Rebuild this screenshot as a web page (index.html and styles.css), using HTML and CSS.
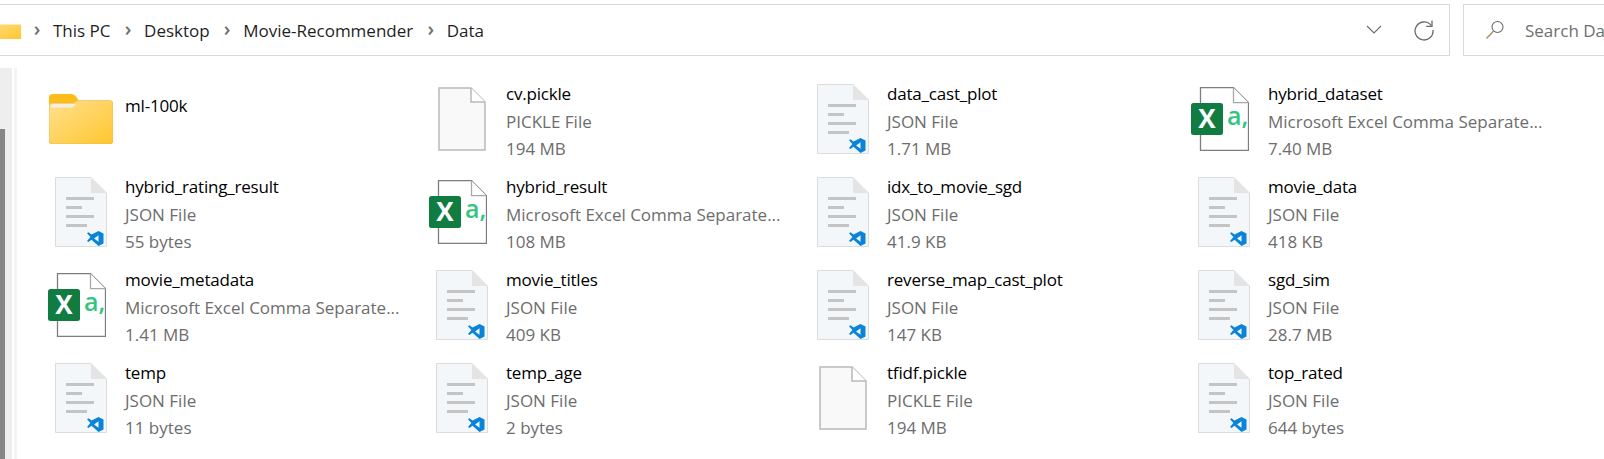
FILE: index.html
```html
<!DOCTYPE html>
<html lang="en">
<head>
    <meta charset="UTF-8">
    <title>Data</title>
    <link rel="stylesheet" href="styles.css">
</head>
<body>
    <svg class="defs" width="0" height="0">
        <defs>
            <linearGradient id="folderFill" x1="0" y1="0" x2="1" y2="1">
                <stop offset="0" stop-color="#ffe08f"/>
                <stop offset="1" stop-color="#ffc62e"/>
            </linearGradient>
            <symbol id="folder" viewBox="0 0 64 50">
                <path d="M0 4a4 4 0 0 1 4-4h18c3 0 5 2 6 4l2 3h30a4 4 0 0 1 4 4v35a4 4 0 0 1-4 4H4a4 4 0 0 1-4-4z" fill="#fcbc19"/>
                <path d="M0 12a3 3 0 0 1 3-3h21l4-2.500h32.500a3.500 3.500 0 0 1 3.500 3.500v36.500a3.500 3.500 0 0 1-3.500 3.500H3.500a3.500 3.500 0 0 1-3.500-3.500z" fill="url(#folderFill)" stroke="#e9b44c" stroke-width=".6"/>
                <path d="M2 12.500a3 3 0 0 1 3-2.500h22l-4 3.500H2z" fill="#f1efe8"/>
            </symbol>
            <symbol id="blank" viewBox="0 0 48 64">
                <path d="M1 1h32l14 14v48H1z" fill="#f9f9f9" stroke="#b9b9b9" stroke-width="1.500"/>
                <path d="M33 1v14h14" fill="#fff" stroke="#b9b9b9" stroke-width="1.500"/>
            </symbol>
            <symbol id="vscode" viewBox="0 0 52 70">
                <path d="M.5.500H36L51.500 16v53.500H.5z" fill="#f4f7fa" stroke="#dcdcdc"/>
                <path d="M36 .5V16h15.500z" fill="#e4e4e4"/>
                <rect x="11" y="20" width="28" height="3" fill="#c4c4c4"/>
                <rect x="11" y="29" width="16" height="3" fill="#c4c4c4"/>
                <rect x="11" y="38" width="28" height="3" fill="#c4c4c4"/>
                <rect x="11" y="47" width="21" height="3" fill="#c4c4c4"/>
                <path d="M43.500 54l5 2.400v10.200l-5 2.400-7-6.300-3 2.300-1.500-1 3.400-3.900-3.400-3.900 1.500-1 3 2.300zm0 4.300l-4.400 3.200 4.400 3.200z" fill="#0a84d8"/>
            </symbol>
            <symbol id="excel" viewBox="0 0 58 64">
                <path d="M9.500.7h33l15 15v47.600h-48z" fill="#fff" stroke="#7d7d7d" stroke-width="1.300"/>
                <path d="M42.500.7v15h15" fill="#fff" stroke="#a8a8a8" stroke-width="1.300"/>
                <rect x="0" y="16" width="32" height="32" rx="2.500" fill="#107c41"/>
                <text x="16" y="41" class="excel-x">X</text>
                <text x="36" y="38" class="excel-a">a,</text>
            </symbol>
        </defs>
    </svg>

    <header class="toolbar">
        <div class="address">
            <svg class="crumb-folder" width="36" height="17" viewBox="0 0 36 17">
                <path d="M0 0h12l3 2.500h21V17H0z" fill="url(#folderFill)"/>
                <path d="M0 0h12l3 2.500H0z" fill="#fcbc19"/>
            </svg>
            <span class="sep">&rsaquo;</span><span class="crumb">This PC</span>
            <span class="sep">&rsaquo;</span><span class="crumb">Desktop</span>
            <span class="sep">&rsaquo;</span><span class="crumb">Movie-Recommender</span>
            <span class="sep">&rsaquo;</span><span class="crumb">Data</span>
            <div class="address-tools">
                <svg width="16" height="10" viewBox="0 0 16 10"><path d="M1 1l7 7 7-7" fill="none" stroke="#6b6b6b" stroke-width="1.100"/></svg>
                <svg width="22" height="22" viewBox="0 0 22 22"><path d="M18.200 6.500A9 9 0 1 0 20 11" fill="none" stroke="#6b6b6b" stroke-width="1.300"/><path d="M19 1.500v5.800h-5.800" fill="none" stroke="#6b6b6b" stroke-width="1.300"/></svg>
            </div>
        </div>
        <div class="search">
            <svg width="20" height="20" viewBox="0 0 20 20"><circle cx="12.500" cy="7" r="5.500" fill="none" stroke="#6b6b6b" stroke-width="1.100"/><path d="M8.500 11L1.500 18.500" fill="none" stroke="#b08a5a" stroke-width="1.300"/></svg>
            <span>Search Data</span>
        </div>
    </header>

    <div class="main">
        <div class="sidebar"><div class="thumb"></div></div>
        <div class="files">
            <div class="file"><div class="icon"><svg class="i-folder"><use href="#folder"/></svg></div><div class="info only"><div class="name">ml-100k</div></div></div>
            <div class="file"><div class="icon"><svg class="i-blank"><use href="#blank"/></svg></div><div class="info"><div class="name">cv.pickle</div><div class="meta">PICKLE File</div><div class="meta">194 MB</div></div></div>
            <div class="file"><div class="icon"><svg class="i-vs"><use href="#vscode"/></svg></div><div class="info"><div class="name">data_cast_plot</div><div class="meta">JSON File</div><div class="meta">1.71 MB</div></div></div>
            <div class="file"><div class="icon"><svg class="i-xl"><use href="#excel"/></svg></div><div class="info"><div class="name">hybrid_dataset</div><div class="meta">Microsoft Excel Comma Separate...</div><div class="meta">7.40 MB</div></div></div>

            <div class="file"><div class="icon"><svg class="i-vs"><use href="#vscode"/></svg></div><div class="info"><div class="name">hybrid_rating_result</div><div class="meta">JSON File</div><div class="meta">55 bytes</div></div></div>
            <div class="file"><div class="icon"><svg class="i-xl"><use href="#excel"/></svg></div><div class="info"><div class="name">hybrid_result</div><div class="meta">Microsoft Excel Comma Separate...</div><div class="meta">108 MB</div></div></div>
            <div class="file"><div class="icon"><svg class="i-vs"><use href="#vscode"/></svg></div><div class="info"><div class="name">idx_to_movie_sgd</div><div class="meta">JSON File</div><div class="meta">41.9 KB</div></div></div>
            <div class="file"><div class="icon"><svg class="i-vs"><use href="#vscode"/></svg></div><div class="info"><div class="name">movie_data</div><div class="meta">JSON File</div><div class="meta">418 KB</div></div></div>

            <div class="file"><div class="icon"><svg class="i-xl"><use href="#excel"/></svg></div><div class="info"><div class="name">movie_metadata</div><div class="meta">Microsoft Excel Comma Separate...</div><div class="meta">1.41 MB</div></div></div>
            <div class="file"><div class="icon"><svg class="i-vs"><use href="#vscode"/></svg></div><div class="info"><div class="name">movie_titles</div><div class="meta">JSON File</div><div class="meta">409 KB</div></div></div>
            <div class="file"><div class="icon"><svg class="i-vs"><use href="#vscode"/></svg></div><div class="info"><div class="name">reverse_map_cast_plot</div><div class="meta">JSON File</div><div class="meta">147 KB</div></div></div>
            <div class="file"><div class="icon"><svg class="i-vs"><use href="#vscode"/></svg></div><div class="info"><div class="name">sgd_sim</div><div class="meta">JSON File</div><div class="meta">28.7 MB</div></div></div>

            <div class="file"><div class="icon"><svg class="i-vs"><use href="#vscode"/></svg></div><div class="info"><div class="name">temp</div><div class="meta">JSON File</div><div class="meta">11 bytes</div></div></div>
            <div class="file"><div class="icon"><svg class="i-vs"><use href="#vscode"/></svg></div><div class="info"><div class="name">temp_age</div><div class="meta">JSON File</div><div class="meta">2 bytes</div></div></div>
            <div class="file"><div class="icon"><svg class="i-blank"><use href="#blank"/></svg></div><div class="info"><div class="name">tfidf.pickle</div><div class="meta">PICKLE File</div><div class="meta">194 MB</div></div></div>
            <div class="file"><div class="icon"><svg class="i-vs"><use href="#vscode"/></svg></div><div class="info"><div class="name">top_rated</div><div class="meta">JSON File</div><div class="meta">644 bytes</div></div></div>
        </div>
    </div>
</body>
</html>
```

FILE: styles.css
```css
html, body {
    margin: 0;
    height: 459px;
    overflow: hidden;
    background: #fff;
    font-family: "Open Sans", "Noto Sans", sans-serif;
    font-size: 17px;
}
.defs {
    display: block;
    height: 0;
}
.toolbar {
    display: flex;
    height: 52px;
    padding-top: 4px;
    gap: 13px;
}
.address {
    flex: none;
    width: 1450px;
    box-sizing: border-box;
    display: flex;
    align-items: center;
    border: 1px solid #d9d9d9;
    border-left: none;
    color: #1f1f1f;
}
.crumb-folder {
    margin-left: -15px;
    margin-right: 11px;
}
.sep {
    width: 10px;
    font-size: 20px;
    line-height: 1;
    font-weight: 600;
    color: #707070;
    text-align: center;
    margin-top: -3px;
    margin-right: 11px;
}
.crumb {
    margin-right: 12.500px;
    white-space: nowrap;
}
.address-tools {
    margin-left: auto;
    display: flex;
    align-items: center;
    gap: 31px;
    padding-right: 14px;
}
.search {
    flex: 1;
    min-width: 0;
    overflow: hidden;
    display: flex;
    align-items: center;
    gap: 20px;
    padding-left: 21px;
    border: 1px solid #d9d9d9;
    border-right: none;
    color: #6f6f6f;
    white-space: nowrap;
}
.search svg {
    flex: none;
}
.main {
    display: flex;
    padding-top: 12px;
}
.sidebar {
    width: 12px;
    height: 391px;
    background: #eee;
    border-right: 2px solid #fff;
    box-shadow: 3px 0 0 #f4f4f4;
}
.thumb {
    width: 5px;
    height: 330px;
    margin-top: 61px;
    background: #868686;
}
.files {
    margin-left: 34px;
    padding-top: 13px;
    display: grid;
    grid-template-columns: repeat(4, 381px);
    grid-auto-rows: 93px;
}
.file {
    display: flex;
    gap: 11px;
}
.icon {
    width: 66px;
    height: 76px;
    display: flex;
    align-items: center;
    justify-content: center;
}
.i-folder { width: 64px; height: 50px; }
.i-blank { width: 48px; height: 64px; }
.i-vs { width: 52px; height: 70px; }
.i-xl { width: 58px; height: 64px; margin-right: 8px; }
.info {
    line-height: 27px;
    white-space: nowrap;
}
.info.only {
    padding-top: 12px;
}
.name {
    color: #000;
    line-height: 25px;
    margin-bottom: 2px;
    letter-spacing: -0.2px;
}
.meta {
    color: #6d6d6d;
}
.excel-x {
    font-family: "Open Sans", sans-serif;
    font-size: 26px;
    font-weight: 700;
    fill: #fff;
    text-anchor: middle;
}
.excel-a {
    font-family: "Open Sans", sans-serif;
    font-size: 25px;
    font-weight: 600;
    fill: #33c481;
}
```
